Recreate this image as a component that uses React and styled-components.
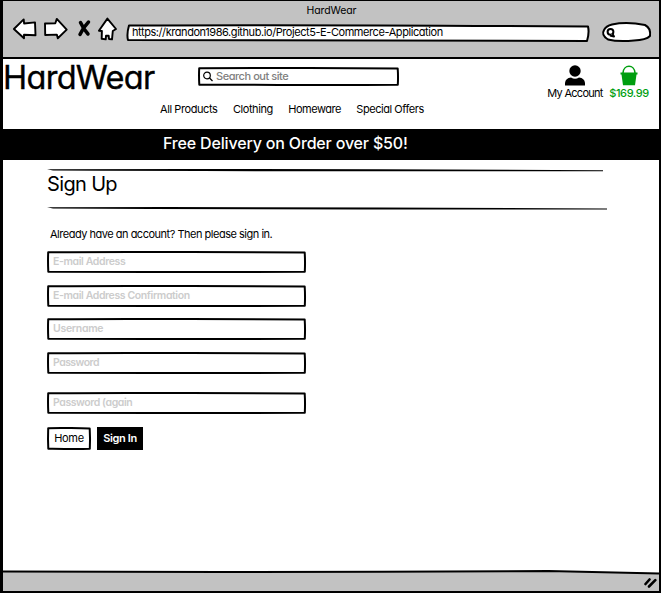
import React from "react";
import styled, { createGlobalStyle } from "styled-components";

const Global = createGlobalStyle`
  *, *::before, *::after { box-sizing: border-box; }
  html, body { margin: 0; padding: 0; background: #fff; overflow: hidden; }
  body { font-family: Inter, "Liberation Sans", sans-serif; font-feature-settings: "cv11" 1; color: #000; }
  input, button { font: inherit; font-feature-settings: inherit; color: inherit; }
`;

const Window = styled.div`
  width: 661px;
  height: 593px;
  display: flex;
  flex-direction: column;
  border: solid #000;
  border-width: 1px 2px 2px 3px;
  background: #fff;
`;

const Label = styled.span`
  display: block;
  white-space: nowrap;
  font-size: ${(p) => p.$size || 11}px;
  line-height: 14px;
  letter-spacing: ${(p) => p.$track || 0}px;
  font-weight: ${(p) => p.$weight || 400};
`;

const Chrome = styled.header`
  height: 58px;
  flex: none;
  background: #c2c2c2;
  border-bottom: 2px solid #000;
`;

const TitleBar = styled.div`
  display: flex;
  justify-content: center;
  height: 15px;
  padding: 3px 0 0 1px;
`;

const Toolbar = styled.div`
  display: flex;
  align-items: flex-start;
  padding-left: 9px;
`;

const NavIcon = styled.svg`
  display: block;
  flex: none;
  fill: #fff;
  stroke: #000;
  stroke-width: 1.9;
  stroke-linejoin: round;
  stroke-linecap: round;
`;

const Outline = styled.svg`
  position: absolute;
  inset: 0;
  width: 100%;
  height: 100%;
  overflow: visible;
  fill: ${(p) => p.$fill || "#fff"};
  stroke: #000;
  stroke-width: 2;
  stroke-linejoin: round;
  z-index: 0;
`;

const AddressBar = styled.div`
  position: relative;
  width: 464px;
  height: 19px;
  margin: 8px 0 0 6px;
  padding: 1px 0 0 6px;
  ${Label} { position: relative; }
`;

const SearchPill = styled.div`
  position: relative;
  width: 50px;
  height: 20px;
  margin: 6px 0 0 12px;
`;

const StoreHeader = styled.div`
  height: 70px;
  flex: none;
  display: grid;
  grid-template-columns: 156px 1fr 112px;
`;

const Brand = styled.h1`
  margin: 0;
  padding: 1px 0 0 0;
  font-size: 32.5px;
  line-height: 35px;
  font-weight: 400;
  letter-spacing: -0.7px;
  white-space: nowrap;
  -webkit-text-stroke: 0.35px #000;
`;

const Middle = styled.div`
  padding-top: 8px;
`;

const SearchBox = styled.label`
  position: relative;
  display: flex;
  align-items: center;
  gap: 3px;
  width: 201px;
  height: 19px;
  margin-left: 39px;
  padding: 0 0 1px 5px;
  svg:not(:first-child), ${Label} { position: relative; }
  ${Label} { color: #808080; }
`;

const Nav = styled.nav`
  display: flex;
  gap: 15.5px;
  padding: 16px 0 0 1px;
`;

const Account = styled.div`
  display: flex;
  padding-top: 6px;
`;

const AccountItem = styled.div`
  width: ${(p) => p.$w}px;
  flex: none;
  display: flex;
  flex-direction: column;
  align-items: center;
  color: ${(p) => p.$color || "#000"};
  svg { display: block; }
`;

const Banner = styled.div`
  height: 31px;
  flex: none;
  background: #000;
  color: #fff;
  padding: 5px 0 0 160px;
  ${Label} { line-height: 18px; }
`;

const Main = styled.main`
  flex: 1;
  padding: 9px 0 0 44px;
`;

const Rule = styled.svg`
  display: block;
  height: 4px;
  overflow: visible;
`;

const Heading = styled.h2`
  margin: 0;
  height: 34px;
  font-size: 20px;
  line-height: 22px;
  font-weight: 400;
  letter-spacing: -0.65px;
`;

const Intro = styled.p`
  margin: 16px 0 0 3px;
`;

const Form = styled.form`
  display: flex;
  flex-direction: column;
  padding-top: 10px;
`;

const FieldFrame = styled.label`
  position: relative;
  display: block;
  width: 259px;
  height: 22px;
  margin-bottom: ${(p) => p.$gap}px;
  padding: 4px 0 0 6px;
  ${Label} { position: relative; color: #ccc; }
`;

const Actions = styled.div`
  display: flex;
  gap: 6px;
`;

const Button = styled.button`
  position: relative;
  width: ${(p) => p.$w}px;
  height: 23px;
  padding: 0 0 2px;
  border: 0;
  background: ${(p) => (p.$dark ? "#000" : "transparent")};
  color: ${(p) => (p.$dark ? "#fff" : "#000")};
  ${Label} { position: relative; text-align: center; }
`;

const StatusBar = styled.footer`
  height: 20px;
  flex: none;
  position: relative;
  display: flex;
  justify-content: flex-end;
  padding: 6px 2px 0 0;
  > svg:last-child { position: relative; }
`;

function SketchBox({ w, h }) {
  return (
    <Outline viewBox={`0 0 ${w} ${h}`} preserveAspectRatio="none" aria-hidden="true">
      <path d={`M1.2 1.2 Q${w * 0.3} .7 ${w * 0.55} 1.1 T${w - 1.3} 1.5 Q${w - 0.7} ${h / 2} ${w - 1.2} ${h - 1.2} Q${w * 0.7} ${h - 0.8} ${w * 0.4} ${h - 1.1} T1.3 ${h - 1.2} Q.8 ${h / 2} 1.2 1.2Z`} />
    </Outline>
  );
}

function Field({ text, gap, track }) {
  return (
    <FieldFrame $gap={gap}>
      <SketchBox w={259} h={22} />
      <Label $size={10.5} $track={track} $weight={600}>{text}</Label>
    </FieldFrame>
  );
}

const fields = [
  { text: "E-mail Address", gap: 12, track: -0.38 },
  { text: "E-mail Address Confirmation", gap: 11, track: -0.39 },
  { text: "Username", gap: 12, track: -0.3 },
  { text: "Password", gap: 18, track: -0.55 },
  { text: "Password (again", gap: 13, track: -0.43 },
];

const navItems = [
  ["All Products", -0.42],
  ["Clothing", -0.42],
  ["Homeware", -0.5],
  ["Special Offers", -0.46],
];

export default function App() {
  return (
    <>
      <Global />
      <Window>
        <Chrome>
          <TitleBar><Label $size={10.5} $track={-0.1}>HardWear</Label></TitleBar>
          <Toolbar>
            <NavIcon width="108" height="27" viewBox="11.5 16 108 27">
              <path d="M13.4 29 23.2 19.4 23.6 23.5 34.5 22.4 35 35.3 23.5 34.8 23.5 38.3Z" />
              <path d="M66.2 29.6 57.3 38.3 56.3 34.6 44.7 35 44.5 23.5 54.8 23.2 56.3 18.9Z" />
              <path d="M106.9 18.6 115.5 29 112.3 31 111.5 39.4 108.5 39 108.2 35.8 105.5 35.8 105.2 39.4 101.2 38.8 101.4 31 98.4 30.7Z" />
              <path fill="none" strokeWidth="3.5" d="M80 22.5Q83 29 87.5 34M88 22Q83 27 79.5 34.5" />
            </NavIcon>
            <AddressBar>
              <Outline viewBox="0 0 464 19" aria-hidden="true">
                <path d="M3 1.5Q180 .5 462 2.5Q463.5 9 461 17Q240 17.5 2 16Q.5 10 3 1.5Z" />
              </Outline>
              <Label $track={-0.43}>https://krandon1986.github.io/Project5-E-Commerce-Application</Label>
            </AddressBar>
            <SearchPill>
              <Outline viewBox="0 0 50 20" aria-hidden="true">
                <path d="M10 2.5Q25-.5 43 3Q49 6 48 14Q44 18 32 18.5Q16 20 6 17.5Q-1 13 2 8Q4 4 10 2.5Z" />
                <circle cx="8.5" cy="9.8" r="2.9" />
                <path d="M8 13.5 12 14.6 10.5 12" />
              </Outline>
            </SearchPill>
          </Toolbar>
        </Chrome>
        <StoreHeader>
          <Brand>HardWear</Brand>
          <Middle>
            <SearchBox>
              <SketchBox w={201} h={19} />
              <svg width="10" height="11" viewBox="0 0 10 11" fill="none" stroke="#000" strokeWidth="1.2">
                <circle cx="4" cy="4.5" r="3.3" /><path d="M6.5 7 9.5 10" />
              </svg>
              <Label $track={-0.45} $weight={500}>Search out site</Label>
            </SearchBox>
            <Nav>
              {navItems.map(([text, track]) => <Label key={text} $track={track}>{text}</Label>)}
            </Nav>
          </Middle>
          <Account>
            <AccountItem $w={56}>
              <svg width="20" height="21" viewBox="0 0 20 21"><circle cx="10" cy="6" r="5.7" /><path d="M0 20.5V18Q.5 13 6 12.5Q10 15 14 12.5Q19.5 13 20 18V20.5Z" /></svg>
              <Label $track={-0.72}>My Account</Label>
            </AccountItem>
            <AccountItem $w={52} $color="#009e0f">
              <svg width="18" height="21" viewBox="0 0 18 21" fill="currentColor"><path d="M3 8C3.5-1 14.5-1 15 8" fill="none" stroke="currentColor" strokeWidth="1.6" /><path d="M.5 7.5H17.5V9.5H16.5L15 20.3H3L1.5 9.5H.5Z" /></svg>
              <Label $track={-0.4} $weight={500}>$169.99</Label>
            </AccountItem>
          </Account>
        </StoreHeader>
        <Banner><Label $size={16} $weight={500} $track={-0.17}>Free Delivery on Order over $50!</Label></Banner>
        <Main>
          <Rule width="560" viewBox="0 0 560 4"><path d="M0 .2Q260-.4 556 1.3L556 2.2Q240 2.5 6 1.6Z" /></Rule>
          <Heading>Sign Up</Heading>
          <Rule width="560" viewBox="0 0 560 4"><path d="M0 .2Q260-.3 560 1.4L560 2.4Q240 2.7 6 1.6Z" /></Rule>
          <Intro><Label $track={-0.49}>Already have an account? Then please sign in.</Label></Intro>
          <Form>
            {fields.map((f) => <Field key={f.text} {...f} />)}
            <Actions>
              <Button type="button" $w={44}><SketchBox w={44} h={23} /><Label $track={-0.3}>Home</Label></Button>
              <Button type="button" $dark $w={46}><Label $weight={600} $track={-0.35}>Sign In</Label></Button>
            </Actions>
          </Form>
        </Main>
        <StatusBar>
          <Outline viewBox="0 0 656 20" preserveAspectRatio="none" $fill="#c2c2c2" aria-hidden="true">
            <path stroke="none" d="M0 0H540L656 2V20H0Z" /><path fill="none" d="M0 .5Q270 1.5 545 0Q600 1 656 2.5" />
          </Outline>
          <svg width="13" height="11" viewBox="0 0 13 11" fill="none" stroke="#000" strokeWidth="2.6" strokeLinecap="round"><path d="M1.5 7 5.5 2.5M5 9.5 11.3 3.2" /></svg>
        </StatusBar>
      </Window>
    </>
  );
}
